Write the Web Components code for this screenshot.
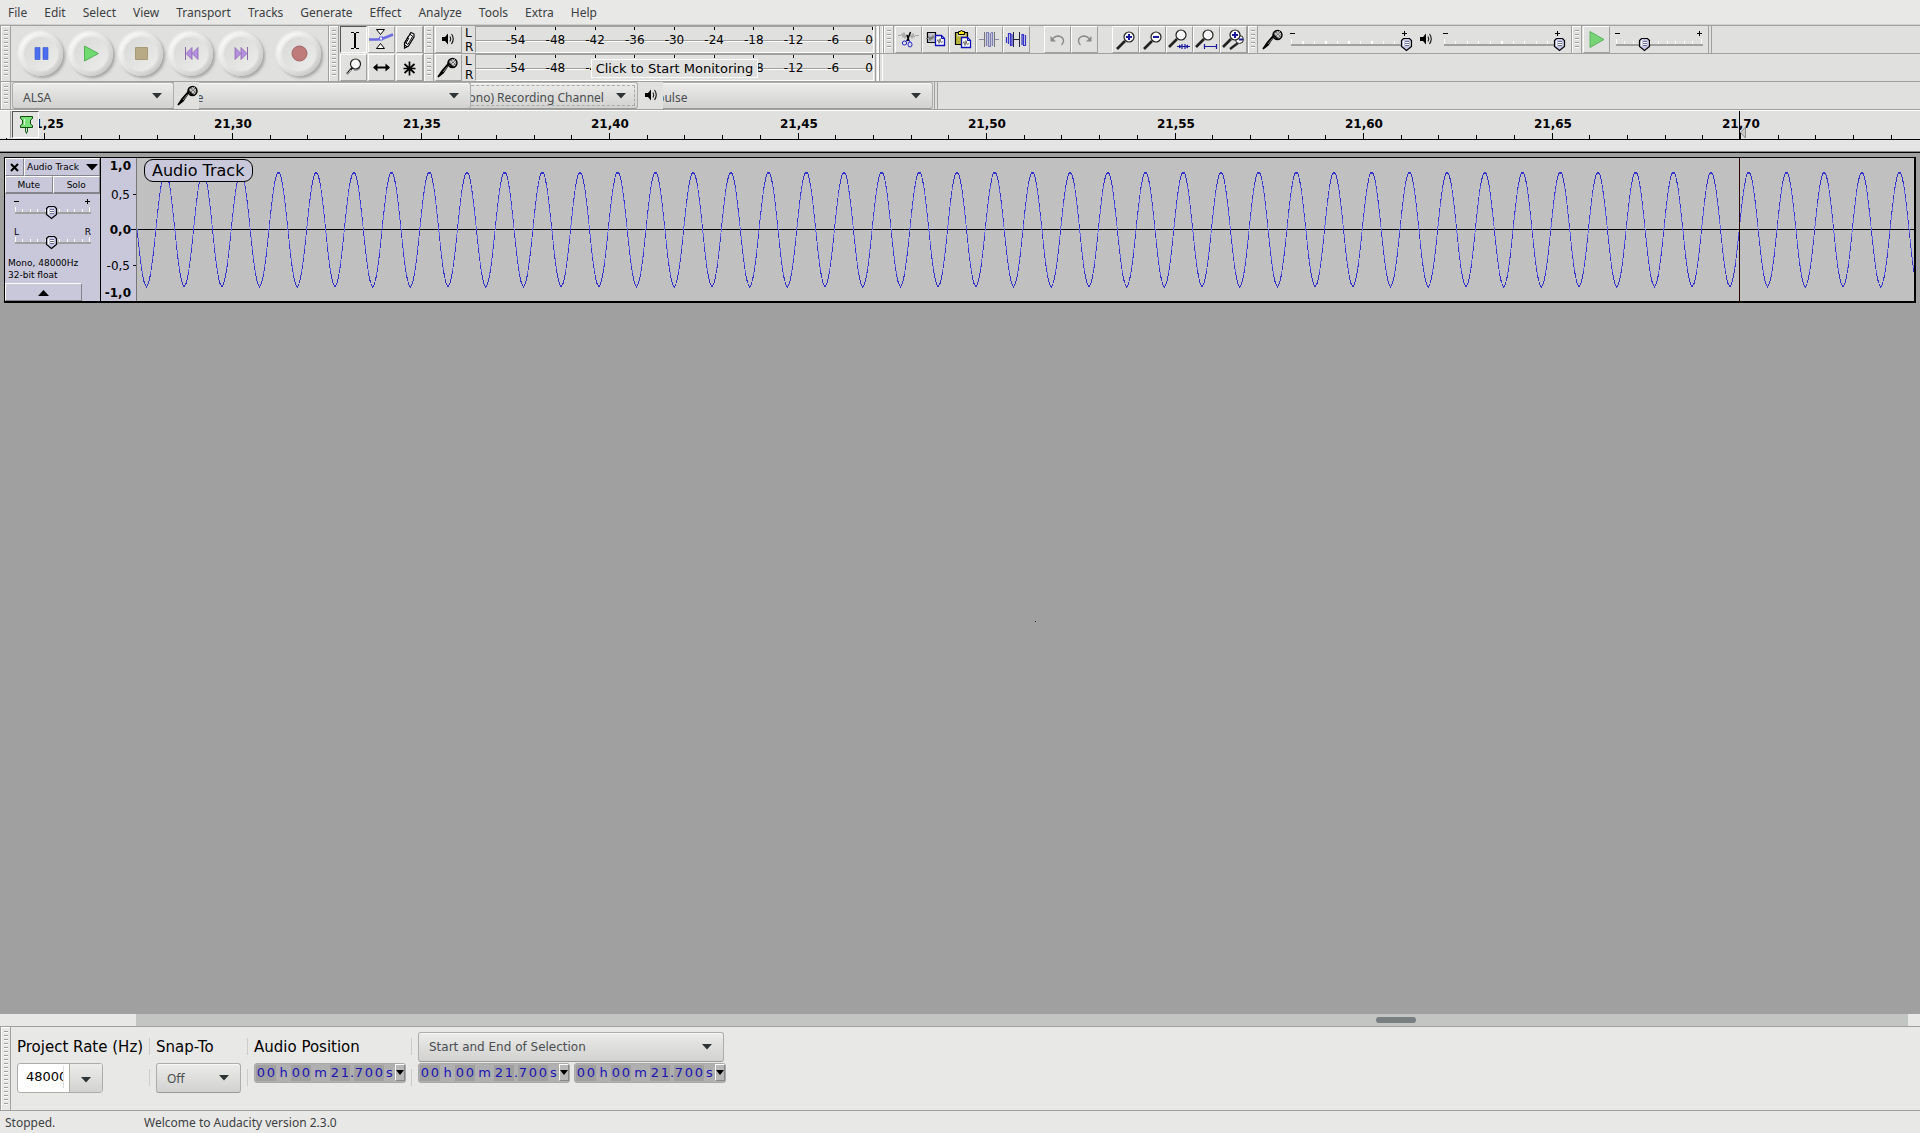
<!DOCTYPE html>
<html lang="en">
<head>
<meta charset="utf-8">
<title>Audacity</title>
<style>
  html, body { margin: 0; height: 100%; }
  body {
    --face: #e0e0de; --light: #e8e8e6; --line: #a0a09e; --panel: #c8c8da;
    display: flex; flex-direction: column; overflow: hidden;
    background: var(--light); color: #000;
    font: 12px/16px "DejaVu Sans", sans-serif;
  }
  track-area { flex: 1; }
</style>
</head>
<body>
<menu-bar></menu-bar>
<tool-dock></tool-dock>
<device-bar></device-bar>
<time-ruler></time-ruler>
<track-area></track-area>
<scroll-strip></scroll-strip>
<selection-bar></selection-bar>
<status-bar><span slot="state">Stopped.</span><span slot="message">Welcome to Audacity version 2.3.0</span></status-bar>

<script>
const UI = '"Noto Sans", "DejaVu Sans", sans-serif';

class Base extends HTMLElement {
  connectedCallback() {
    if (this.shadowRoot) return;
    const root = this.attachShadow({ mode: 'open' });
    root.innerHTML = `<style>*{box-sizing:border-box}:host{box-sizing:border-box}${this.css()}</style>${this.html()}`;
  }
  css() { return ''; }
  html() { return '<slot></slot>'; }
}

/* Icons are drawn on a 27 x 27 grid, the size of a tool button. */
const lens = (x, y) => `<path d="M${x - 4} ${y + 4}l-8 8" stroke="#222" stroke-width="2.6"/><circle cx="${x}" cy="${y}" r="5" fill="#f8f8f8" stroke="#222" stroke-width="1.2"/>`;
const ICONS = {
  ibeam: '<path shape-rendering="crispEdges" d="M11 6.5h3m2 0h3M15 7v15M11 22.5h3m2 0h3" stroke="#000" stroke-width="1.2"/>',
  envelope: '<path d="M1 13.5h8l6-1 10-4" stroke="#6b6be2" stroke-width="2.6"/><path d="M8.5 3.5h8l-4 5zM8.5 22.5h8l-4-5z" fill="#fff" stroke="#000"/><rect x="11.5" y="11" width="3" height="3" fill="#fff" stroke="#6b6be2"/>',
  pencil: '<path d="M15 6.5l3 1.5v3l-5.5 9-4 2v-5z" fill="#fff" stroke="#000" stroke-width="1.2"/><path d="M13.5 8l3.5 2.5M12 10.5l-3 6 3 2 4.5-8M8.5 22l.5-3 2 1.5z" stroke="#000" fill="none"/><path d="M13 12l-3 5" stroke="#000"/>',
  magnify: '<path d="M12.5 13.5L7 20" stroke="#222" stroke-width="2"/><path d="M11 16l-4.5 5" stroke="#ddd" stroke-width="1"/><path d="M20 14a6 6 0 0 1-6 2" stroke="#999" stroke-width="1.5"/><circle cx="15.5" cy="10" r="5" fill="#fafafa" stroke="#222" stroke-width="1.2"/>',
  shift: '<path d="M6 13.5h15" stroke="#000" stroke-width="2"/><path d="M5 13.5l4.5-4v8zM22 13.5l-4.5-4v8z" fill="#000"/>',
  multi: '<path d="M13.5 7.5v14M8.5 10l10 9M18.5 10l-10 9M7.5 14.5h12" stroke="#000" stroke-width="1.7"/>',
  speaker: '<path d="M7 11h3l3-3.5v11L10 15H7z" fill="#000"/><path d="M15 10.5q1.5 2.5 0 5M16.5 8q3.5 4.5 0 10" stroke="#222" stroke-width="1.2" fill="none"/>',
  mic: '<path d="M14 10L8 19l-5 4 4-6 6-7z" fill="#000" stroke="#000" stroke-width="1.5"/><path d="M12.5 12.5L8 18" stroke="#888"/><circle cx="17.5" cy="9" r="4.5" fill="#777" stroke="#000" stroke-width="1.4"/><path d="M15 7l5 5M17 5l4 5M14 10l6-5M16 12l5-5" stroke="#ddd" stroke-width=".8"/><path d="M13 8.5l5 5" stroke="#000" stroke-width="1.5"/>',
  cut: '<path d="M3 9.5h3l1-2 1 4 1-5 1 6 1-4 1 3m3 0l1-3 1 4 1-5 1 4 1-2h4" stroke="#999" stroke-width=".8" fill="none"/><path d="M15.5 6l-3.5 9M12 9l2 6" stroke="#000" stroke-width="1.5"/><path d="M12 14l-2 2M14 14l1 2" stroke="#22c"/><ellipse cx="9.5" cy="17" rx="2.2" ry="2" fill="none" stroke="#22c"/><ellipse cx="15" cy="18.5" rx="2" ry="2.5" fill="none" stroke="#22c"/>',
  copy: '<path d="M5.5 6.5h8v10h-8z" fill="#c4c4cc" stroke="#000" stroke-width="1.2"/><path d="M4 12.5h2l1-2 1 4 1-4 1 3 1-4 1 3" stroke="#777" fill="none"/><path d="M13.5 9.5h6l3 3v7h-9z" fill="#fff" stroke="#11b" stroke-width="1.3"/><path d="M19.5 9.5v3h3" stroke="#11b" fill="none"/><path d="M15 15.5l1-2 1 4 1-5 1 4 2-1" stroke="#777" fill="none"/>',
  paste: '<path d="M6.5 6.5h12v12h-12z" fill="#b8b43c" stroke="#000" stroke-width="1.2"/><path d="M8 8.5h9v2H8z" fill="#d8d8a0"/><path d="M9.5 5.5h2l1-1.5 1 1.5h2v3h-6z" fill="#ffe81c" stroke="#000"/><path d="M12.5 11.5h6l3 3v7h-9z" fill="#fff" stroke="#11b" stroke-width="1.3"/><path d="M18.5 11.5v3h3" stroke="#11b" fill="none"/><path d="M14 17.5l1-2 1 4 1-5 1 4 2-1" stroke="#777" fill="none"/>',
  trim: '<path d="M3 13.5h5m11 0h4" stroke="#8a8aa8"/><path d="M8.5 6v15M18.5 6v15" stroke="#777"/><path d="M10.5 20V7M12.5 20V7M14.5 20V7M16.5 20V7" stroke="#8080b8" stroke-width="1.3"/><path d="M10 6.5h3m2 0h2M12 20.5h3" stroke="#8080b8"/>',
  silence: '<path d="M3.5 17v-6M5.5 18V7.5h2V19.5h1.5V8M19 19V8.5h1.5v11h2V9" stroke="#3434c8" stroke-width="1.2" fill="none"/><path d="M10.5 13.5h6" stroke="#223"/><path d="M10.5 6v15M16.5 6v15" stroke="#224"/>',
  undo: '<path d="M7.5 14q3-4 7-4 5 1 5 5 0 2-2 4" fill="none" stroke="#8a8a8a" stroke-width="1.4"/><path d="M6.5 10v5.5h5.5z" fill="#8a8a8a"/>',
  redo: '<path d="M19.5 14q-3-4-7-4-5 1-5 5 0 2 2 4" fill="none" stroke="#8a8a8a" stroke-width="1.4"/><path d="M20.5 10v5.5h-5.5z" fill="#8a8a8a"/>',
  zoomin: lens(17, 11) + '<path d="M14 11h6M17 8v6" stroke="#1a1a9c" stroke-width="2"/>',
  zoomout: lens(17, 11) + '<path d="M14 11h6" stroke="#1a1a9c" stroke-width="2"/>',
  zoomsel: lens(15, 9) + '<path d="M11 20.5h13M16 18v5M19 18v5" stroke="#1a1a9c" stroke-width="1.2"/><path d="M13 18.5l3 2-3 2zM22 18.5l-3 2 3 2z" fill="#1a1a9c"/>',
  zoomfit: lens(15, 9) + '<path d="M11.5 18v5M23.5 18v5M11 20.5h13" stroke="#1a1a9c" stroke-width="1.2"/>',
  zoomtoggle: '<path d="M18 17l-8 6" stroke="#222" stroke-width="2.2"/><circle cx="19.5" cy="13.5" r="4" fill="#fff" stroke="#222"/><path d="M19 13.5h4" stroke="#1a1a9c" stroke-width="2"/>' + lens(15, 9) + '<path d="M12 9h6M15 6v6" stroke="#1a1a9c" stroke-width="2"/>',
  playat: '<path d="M7 5.5l14 8-14 8z" fill="#76d376" stroke="#5fb35f"/>',
  pause: '<g fill="#4a6ef0" stroke="#3c58c8" stroke-width=".6"><path d="M7 7.5h5v12H7zM15 7.5h5v12h-5z"/></g>',
  play: '<path d="M6.5 6l14 7.5-14 7.5z" fill="#6fda6f" stroke="#58b058"/>',
  stop: '<path d="M7.5 7.5h12v12h-12z" fill="#b9aa86" stroke="#a89a78"/>',
  start: '<path d="M7.5 7v13" stroke="#8a68a8"/><path d="M14 7.5v12l-6-6zM20 7.5v12l-6-6z" fill="#b58fe0" stroke="#8a68b0" stroke-width=".8"/>',
  end: '<path d="M19.5 7v13" stroke="#8a68a8"/><path d="M7 7.5v12l6-6zM13 7.5v12l6-6z" fill="#b58fe0" stroke="#8a68b0" stroke-width=".8"/>',
  record: '<circle cx="13.5" cy="13.5" r="7.5" fill="#bf7a7a" stroke="#a06464"/>',
  pin: '<path d="M8.5 5.5h12v2l-2 1.5v4l2 1.5v2h-12v-2l2-1.5V9l-2-1.5z" fill="#7ae07a" stroke="#114a11"/><path d="M12.5 8v6" stroke="#d6ffd6"/><path d="M13.5 17v3l1 2.5 1-2.5v-3" fill="#cfe8cf" stroke="#1a5a1a"/>',
  close: '<path d="M10 10l7 7M17 10l-7 7" stroke="#000" stroke-width="2"/>'
};
customElements.define('au-icon', class extends Base {
  css() { return ':host{display:block;width:27px;height:27px;flex:none}svg{display:block}'; }
  html() { return `<svg width="27" height="27" viewBox="0 0 27 27" fill="none" aria-hidden="true">${ICONS[this.getAttribute('name')]}</svg>`; }
});

customElements.define('menu-bar', class extends Base {
  css() { return `:host{display:block;border-bottom:1px solid #cfcfcd}
    nav{display:flex;height:24px;align-items:center;gap:17px;padding:2px 0 0 8px}
    a{font:12px/20px ${UI};color:#3c4042;text-decoration:none}`; }
  html() {
    return '<nav>' + 'File Edit Select View Transport Tracks Generate Effect Analyze Tools Extra Help'
      .split(' ').map(t => `<a href="#">${t}</a>`).join('') + '</nav>';
  }
});

customElements.define('au-grip', class extends Base {
  css() { return `:host{display:flex;flex:none;width:11px;justify-content:center;padding:4px 0;
      border:1px solid var(--line);border-width:0 1px;box-shadow:inset 1px 1px #fff}
    i{width:4px;background:repeating-linear-gradient(#a0a09e 0 1px,#fbfbfa 1px 2px,transparent 2px 4px)}`; }
  html() { return '<i></i>'; }
});

customElements.define('tool-button', class extends Base {
  css() { return `:host{display:block;flex:none}
    button{display:block;width:27px;height:27px;padding:0;background:var(--face);
      border:1px solid;border-color:#fff #a0a09e #a0a09e #fff;border-radius:0}
    :host([pressed]) button{border-color:#555 #fff #fff #555;background:#e4e4e2}
    au-icon{margin:-1px}`; }
  html() { return `<button aria-label="${this.getAttribute('label')}"><au-icon name="${this.getAttribute('icon')}"></au-icon></button>`; }
});

customElements.define('round-button', class extends Base {
  css() { return `:host{display:block;flex:none}
    button{display:grid;place-items:center;width:44px;height:44px;padding:0;border:0;border-radius:50%;
      background:linear-gradient(135deg,#f6f6f5 20%,#e2e2e0 50%,#cacac8 85%);
      box-shadow:2px 2px 3px #a4a4a2,-1px -1px 2px #f4f4f3}
    span{display:grid;place-items:center;width:34px;height:34px;border-radius:50%;
      background:linear-gradient(135deg,#d9d9d7,#e2e2e0 50%,#eeeeed);box-shadow:0 0 3px 1px #e4e4e2}`; }
  html() { return `<button aria-label="${this.getAttribute('label')}"><span><au-icon name="${this.getAttribute('icon')}"></au-icon></span></button>`; }
});

const THUMB = "url(\"data:image/svg+xml,%3Csvg xmlns='http://www.w3.org/2000/svg' width='13' height='15'%3E%3Cpath d='M3.5 1.5h6l2 2v6l-5 4-5-4v-6z' fill='%23c6c6e2' stroke='%23000' stroke-width='1.2'/%3E%3Cpath d='M3.5 9V3.5' stroke='%23fff'/%3E%3Cpath d='M5 4.5h4M5 6.5h4M5 8.5h4' stroke='%23707090'/%3E%3Cpath d='M5 5.5h4M5 7.5h4' stroke='%23fff'/%3E%3C/svg%3E\")";
customElements.define('au-slider', class extends Base {
  css() {
    return `:host{display:flex;flex-direction:column;flex:none}
    .ends{display:flex;justify-content:space-between;height:7px;padding:0 5px;font:9px/9px "DejaVu Sans",sans-serif}
    .ends svg{display:block}
    input{appearance:none;margin:0;width:100%;height:15px;background:
      linear-gradient(#a0a09e,#a0a09e) 6px 7px/calc(100% - 11px) 2px no-repeat,
      linear-gradient(#fff,#fff) 6px 2px/1px 5px no-repeat,
      linear-gradient(#fff,#fff) calc(100% - 6px) 2px/1px 5px no-repeat,
      repeating-linear-gradient(90deg,#fff 0 1px,transparent 1px 10%) 6px 4px/calc(100% - 13px) 3px no-repeat}
    input::-webkit-slider-thumb{appearance:none;width:13px;height:15px;border:0;background:${THUMB}}`;
  }
  html() {
    const t = this.getAttribute('ends');
    const ends = t ? `<div class="ends"><span>${t[0]}</span><span>${t[1]}</span></div>`
      : '<div class="ends"><svg width="6" height="7"><path d="M0 3.5h5" stroke="#000"/></svg><svg width="7" height="7"><path d="M1 3.5h5M3.5 1v5" stroke="#000"/></svg></div>';
    return `${ends}<input type="range" min="0" max="100" value="${this.getAttribute('value')}" aria-label="${this.getAttribute('label')}">`;
  }
});

customElements.define('au-combo', class extends Base {
  css() { return `:host{display:block;position:relative;flex:none}
    select{appearance:none;display:block;width:100%;height:100%;margin:0;padding:var(--combo-drop,2px) 24px 0 10px;
      border:1px solid #adadab;border-bottom-color:#9a9a98;border-radius:3px;color:#4a4e50;
      font:12px/20px var(--combo-font, ${UI});
      background:linear-gradient(#ececea,#dededc 50%,#d2d2d0);box-shadow:inset 0 1px #f8f8f7}
    :host([focused]) select{outline:1px dashed #aaa;outline-offset:-4px}
    svg{position:absolute;right:12px;top:calc(50% - 3px);pointer-events:none}`; }
  html() { return `<select aria-label="${this.getAttribute('label')}"><option>${this.getAttribute('value')}</option></select>
    <svg width="10" height="6"><path d="M0 0h10l-5 5.5z" fill="#2e3436"/></svg>`; }
});

customElements.define('level-meter', class extends Base {
  css() { return `:host{display:flex;height:28px;border-bottom:1px solid var(--line)}
    .b{padding-left:1px}
    .lr{width:13px;padding-left:3px;font:12px/14px "DejaVu Sans",sans-serif;height:27px}
    .lr span{display:block;height:14px}
    .bar{width:399px;display:flex;border:1px solid #fff;border-top-color:var(--line);border-left-color:var(--line);
      background:linear-gradient(var(--line),var(--line)) 0 13px/100% 1px no-repeat,linear-gradient(#fff,#fff) 0 14px/100% 1px no-repeat}
    .bar span{width:10%;text-align:center;line-height:27px;height:25px;
      background:linear-gradient(#000,#000) 50% 0/1px 3px no-repeat}
    .bar span:first-child{margin-left:5%}
    .bar span:last-child{width:5%;text-align:right;background-position:100% 0}
    .h{width:9px;background:linear-gradient(90deg,transparent 1px,var(--line) 1px 2px,transparent 2px 3px,#fff 3px 5px,var(--line) 5px 6px,transparent 6px 8px,#fff 8px)}`; }
  html() {
    const marks = ['-54', '-48', '-42', '-36', '-30', '-24', '-18', '-12', '-6', '0'];
    return `<div class="b"><tool-button icon="${this.getAttribute('icon')}" label="${this.getAttribute('label')}"></tool-button></div>
      <div class="lr"><span>L</span><span>R</span></div>
      <div class="bar">${marks.map(m => `<span>${m}</span>`).join('')}</div><div class="h"></div>`;
  }
});

customElements.define('tool-dock', class extends Base {
  css() { return `:host{display:flex;border-top:1px solid var(--line);background:var(--face);height:57px;border-bottom:1px solid var(--line)}
    .transport{display:flex;align-items:center;gap:6px;padding:0 7px 0 8px;width:317px}
    .transport round-button:last-child{margin-left:8px}
    .tools{display:grid;grid-template-columns:repeat(3,27px);gap:1px;padding-left:1px;width:84px;height:55px}
    .split{display:grid;grid-template-rows:28px 27px}
    .split au-grip:first-child{border-bottom:1px solid var(--line)}
    .meters{position:relative}
    .tip{position:absolute;left:157px;top:33px;width:167px;height:19px;border:1px solid #fff;background:var(--face);
      font:13px/17px "DejaVu Sans",sans-serif;text-align:center;white-space:nowrap}
    .right{flex:1}
    .row{display:flex;height:28px;border-bottom:1px solid var(--line)}
    .edit{display:flex;padding-left:1px}
    .gap{width:14px}
    .mixer{display:flex;width:313px;padding:0 0 0 2px}
    .mixer au-icon{width:25px}
    au-slider{margin-top:4px}
    .mixer au-slider{width:128px}
    .edge{width:4px;border:1px solid var(--line);border-width:0 1px}
    .speed{display:flex;padding-left:1px}
    .speed au-slider{width:98px}`; }
  html() {
    const t = (icon, label, x = '') => `<tool-button icon="${icon}" label="${label}" ${x}></tool-button>`;
    const r = (icon, label) => `<round-button icon="${icon}" label="${label}"></round-button>`;
    return `<au-grip></au-grip>
    <div class="transport">${r('pause', 'Pause')}${r('play', 'Play')}${r('stop', 'Stop')}${r('start', 'Skip to Start')}${r('end', 'Skip to End')}${r('record', 'Record')}</div>
    <au-grip></au-grip>
    <div class="tools">${t('ibeam', 'Selection Tool', 'pressed')}${t('envelope', 'Envelope Tool')}${t('pencil', 'Draw Tool')}${t('magnify', 'Zoom Tool')}${t('shift', 'Time Shift Tool')}${t('multi', 'Multi-Tool')}</div>
    <div class="split"><au-grip></au-grip><au-grip></au-grip></div>
    <div class="meters">
      <level-meter icon="speaker" label="Playback Level"></level-meter>
      <level-meter icon="mic" label="Recording Level"></level-meter>
      <div class="tip" role="tooltip">Click to Start Monitoring</div>
    </div>
    <div class="right"><div class="row">
      <au-grip></au-grip>
      <div class="edit">${t('cut', 'Cut')}${t('copy', 'Copy')}${t('paste', 'Paste')}${t('trim', 'Trim Audio')}${t('silence', 'Silence Audio')}<div class="gap"></div>${t('undo', 'Undo')}${t('redo', 'Redo')}<div class="gap"></div>${t('zoomin', 'Zoom In')}${t('zoomout', 'Zoom Out')}${t('zoomsel', 'Zoom to Selection')}${t('zoomfit', 'Fit Project')}${t('zoomtoggle', 'Zoom Toggle')}</div>
      <au-grip></au-grip>
      <div class="mixer"><au-icon name="mic"></au-icon><au-slider value="100" label="Recording Volume"></au-slider><au-icon name="speaker"></au-icon><au-slider value="100" label="Playback Volume"></au-slider></div>
      <au-grip></au-grip>
      <div class="speed">${t('playat', 'Play-at-Speed')}<au-slider value="33" label="Playback Speed"></au-slider></div>
      <div class="edge"></div>
    </div></div>`;
  }
});

/* The combo boxes are wider than their slots, so each one tucks under the item before it. */
customElements.define('device-bar', class extends Base {
  css() { return `:host{display:flex;height:28px;background:var(--face);border-bottom:1px solid var(--line);--combo-drop:4px}
    au-grip{margin-right:1px}
    au-combo{height:27px}
    .host{width:162px;z-index:6}
    .ico{width:25px;height:27px;background:var(--face);z-index:5;position:relative;overflow:hidden}
    .ico.mic{padding-left:1px}
    .in{width:309px;margin-left:-37px;z-index:4}
    .ch{width:205px;margin-left:-38px;z-index:3}
    .out{width:287px;margin-left:-17px;z-index:2}
    .edge{width:4px;margin-left:1px;border:1px solid var(--line);border-width:0 1px}`; }
  html() {
    return `<au-grip></au-grip><au-combo class="host" label="Audio Host" value="ALSA"></au-combo>
    <div class="ico mic"><au-icon name="mic"></au-icon></div><au-combo class="in" label="Recording Device" value="pulse"></au-combo>
    <au-combo class="ch" focused label="Recording Channels" value="1 (Mono) Recording Channel"></au-combo>
    <div class="ico"><au-icon name="speaker"></au-icon></div><au-combo class="out" label="Playback Device" value="pulse"></au-combo><div class="edge"></div>`;
  }
});

customElements.define('time-ruler', class extends Base {
  css() { return `:host{display:block;position:relative;height:43px;background:#e4e4e4;border-top:1px solid #fff;
      border-bottom:1px solid #000;box-shadow:inset 0 -1px #8a8a8a}
    .scale{display:block;width:100%;height:29px;background:var(--face);border-bottom:1px solid #000}
    text{font:bold 12px "DejaVu Sans",sans-serif;text-anchor:middle}
    .left{position:absolute;left:0;top:0;display:flex;background:var(--face)}
    .end{width:11px;border-right:1px solid var(--line);background:#ececea;margin-right:1px}`; }
  html() {
    let ticks = '', labels = '';
    for (let i = -1; i < 70; i++) {
      const x = Math.floor(44 + i * 37.7);
      ticks += `M${x}.5 28v${i % 5 ? -4 : -6}`;
      if (i >= 0 && i % 5 === 0 && x + 20 < innerWidth) labels += `<text x="${x + 1}" y="17">${((2125 + i) / 100).toFixed(2).replace('.', ',')}</text>`;
    }
    return `<svg class="scale">${labels}<path d="${ticks}M1739.5 0v28" stroke="#000" shape-rendering="crispEdges"/><path d="M1745.5 16v11l-5-5.5z" fill="#c8c8c8" stroke="#8a8a8a"/></svg>
    <div class="left"><div class="end"></div><tool-button icon="pin" label="Pinned Play Head" pressed></tool-button></div>`;
  }
});

customElements.define('track-panel', class extends Base {
  css() { return `:host{display:flex;flex-direction:column;width:96px;flex:none;background:var(--panel);border-right:1px solid #000;font:9px/12px "DejaVu Sans",sans-serif}
    .row{display:flex}
    button{flex:1;height:18px;padding:0;background:var(--panel);border:1px solid;border-color:#fff #84848c #84848c #fff;border-radius:0;font:inherit;color:#000}
    .x{flex:none;width:19px;overflow:hidden}
    .x au-icon{margin:-5px}
    .name{display:flex;align-items:center;justify-content:space-between;padding:0 1px 0 2px}
    .mute{border-bottom-width:2px}
    au-slider{width:87px;margin-left:4px}
    .gain{margin-top:4px}
    .pan{margin-top:8px}
    p{margin:7px 0 0 3px}
    .fold{flex:none;width:77px;margin-top:auto;padding-top:1px;display:grid;place-items:center}`; }
  html() {
    return `<div class="row"><button class="x" aria-label="Close track"><au-icon name="close"></au-icon></button><button class="name"><span>Audio Track</span><svg width="12" height="7"><path d="M0 0h12l-6 6.5z"/></svg></button></div>
    <div class="row"><button class="mute">Mute</button><button class="mute">Solo</button></div>
    <au-slider class="gain" value="49" label="Gain"></au-slider>
    <au-slider class="pan" value="49" ends="LR" label="Pan"></au-slider>
    <p>Mono, 48000Hz<br>32-bit float</p>
    <button class="fold" aria-label="Collapse"><svg width="11" height="6"><path d="M0 6h11l-5.5-6z"/></svg></button>`;
  }
});

customElements.define('wave-view', class extends Base {
  css() { return `:host{display:block;position:relative;flex:1;min-width:0;overflow:hidden;background:#c0c0c0}
    svg{display:block;width:100%;height:143px}
    h2{position:absolute;left:7px;top:1px;margin:0;padding:0 8px 0 7px;border:1px solid #000;border-radius:9px;background:var(--panel);
      font:16px/21px "DejaVu Sans",sans-serif}`; }
  html() {
    const mid = 71, amp = 57, cursor = 1602;
    const y = x => amp * Math.sin(2 * Math.PI * (x - cursor - .3) / 37.7);
    let dark = '', pale = '';
    for (let x = 0; x < 2600; x++) {
      const a = y(x), b = y(x + 1), lo = Math.min(a, b), hi = Math.max(a, b);
      const top = Math.round(mid - hi), h = Math.max(2, Math.round(hi - lo));
      dark += `M${x}.5 ${top}v${h}`;
      if (h > 5) pale += (a + b > 0) ? `M${x}.5 ${top + (h >> 1)}v${h - (h >> 1)}` : `M${x}.5 ${top}v${h >> 1}`;
    }
    return `<svg shape-rendering="crispEdges" aria-hidden="true"><path d="M0 71.5h2600" stroke="#000"/><path d="${dark}" stroke="#3232c8"/><path d="${pale}" stroke="#6464e6"/><path d="M${cursor}.5 0v143" stroke="#2c0000"/></svg>
    <h2>Audio Track</h2>`;
  }
});

customElements.define('track-area', class extends Base {
  css() { return `:host{display:block;position:relative;background:#a0a0a0;padding:4px 4px 0;min-height:0}
    .track{display:flex;height:146px;border:1px solid #000;border-width:1px 2px 2px 1px}
    .v{flex:none;width:36px;background:var(--panel);border-right:1px solid #777}
    text{font:12px "DejaVu Sans",sans-serif;text-anchor:end}
    .b{font-weight:bold}
    .dot{position:absolute;left:53.9%;top:468px;width:1px;height:1px;background:#000}`; }
  html() {
    return `<div class="track"><track-panel></track-panel>
      <svg class="v" width="36" height="143"><path d="M32 36.5h4M30 71.5h6M32 107.5h4" stroke="#000"/>
        <text class="b" x="30" y="12">1,0</text><text x="29" y="41">0,5</text><text class="b" x="30" y="76">0,0</text><text x="29" y="112">-0,5</text><text class="b" x="30" y="139">-1,0</text></svg>
      <wave-view></wave-view></div><div class="dot"></div>`;
  }
});

customElements.define('scroll-strip', class extends Base {
  css() { return `:host{display:flex;height:12px;padding:0 12px 0 136px}
    div{flex:1;background:#c3c5c3;padding-top:3px}
    i{display:block;width:40px;height:6px;margin-left:70%;border-radius:3px;background:#797f7f}`; }
  html() { return '<div role="scrollbar" aria-label="Timeline" aria-valuenow="70"><i></i></div>'; }
});

customElements.define('time-field', class extends Base {
  css() { return `:host{display:flex;height:20px;width:152px;padding:1px 0 1px 1px;border:1px solid #aaa;border-radius:3px;background:#b0b0b0;
      font:13px/16px "DejaVu Sans",sans-serif;color:#1a12b4}
    span{flex:none;text-align:center;height:16px;white-space:pre}
    .d{width:10px;background:#a0a0a0}
    button{flex:1;margin:-1px 0 0;padding:0;border:1px solid;border-color:#fff #888 #888 #fff;background:#b8b8b8;display:grid;place-items:center}
    svg{margin:0 -1px}`; }
  html() {
    const w = { h: 15, m: 19, '.': 4, s: 11 };
    const cells = [...'00h00m21.700s'].map(c => w[c] ? `<span style="width:${w[c]}px">${c}</span>` : `<span class="d">${c}</span>`).join('');
    return `${cells}<button aria-label="Time format"><svg width="8" height="5"><path d="M0 0h8l-4 5z"/></svg></button>`;
  }
});

customElements.define('selection-bar', class extends Base {
  css() { return `:host{display:flex;height:85px;border:1px solid var(--line);border-width:1px 0;background:var(--light)}
    .col{display:flex;flex-direction:column;padding:5px 0 0 6px}
    .head{height:31px;font:15px/30px "DejaVu Sans",sans-serif;white-space:nowrap}
    .rate{width:138px}
    .snap{width:97px}
    .pos{width:163px}
    .sep{width:1px;padding-top:11px}
    .sep i{display:block;width:1px;height:17px;background:#ccccca;margin-bottom:14px}
    .box{display:flex;width:86px;height:30px;border:1px solid #adadab;border-radius:3px;background:#fff;overflow:hidden}
    input{flex:none;width:46px;padding:0 0 0 8px;border:0;border-right:1px solid #ddd;border-radius:0;font:13px/20px "DejaVu Sans",sans-serif;background:none;margin:2px 5px 4px 0;outline:0}
    .box button{flex:1;padding:0;border:0;border-left:1px solid #adadab;background:linear-gradient(#ececea,#d2d2d0)}
    au-combo{height:30px}
    .snap au-combo{width:85px}
    .range au-combo{width:306px;margin-bottom:1px;--combo-font:"DejaVu Sans",sans-serif;--combo-drop:0px}
    .times{display:flex;gap:4px}`; }
  html() {
    const sep = '<div class="sep"><i></i><i></i></div>';
    return `<au-grip></au-grip>
    <div class="col rate"><label class="head" for="rate">Project Rate (Hz)</label>
      <div class="box"><input id="rate" value="48000"><button aria-label="Choose rate"><svg width="10" height="6"><path d="M0 0h10l-5 5.5z" fill="#2e3436"/></svg></button></div></div>${sep}
    <div class="col snap"><span class="head">Snap-To</span><au-combo label="Snap-To" value="Off"></au-combo></div>${sep}
    <div class="col pos"><span class="head">Audio Position</span><time-field></time-field></div>${sep}
    <div class="col range"><au-combo label="Selection mode" value="Start and End of Selection"></au-combo>
      <div class="times"><time-field></time-field><time-field></time-field></div></div>`;
  }
});

customElements.define('status-bar', class extends Base {
  css() { return `:host{display:flex;height:22px;padding:1px 0 0 5px;background:var(--light);font:12px/22px ${UI};color:#3c4042}
    .state{width:139px}`; }
  html() { return '<div class="state"><slot name="state"></slot></div><div><slot name="message"></slot></div>'; }
});
</script>
</body>
</html>
